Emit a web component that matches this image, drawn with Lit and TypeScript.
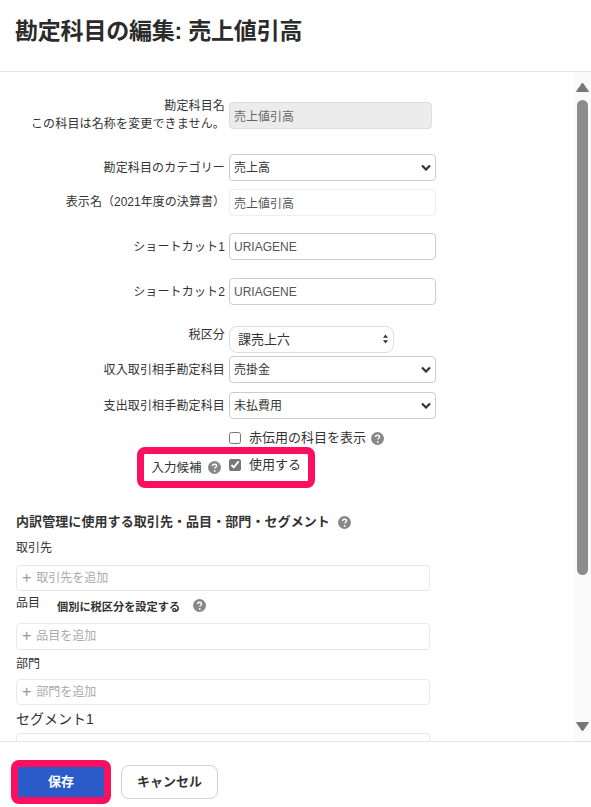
import { LitElement, html, css, svg } from "lit";
import { customElement } from "lit/decorators.js";

const help = () => html`<svg class="help" viewBox="0 0 13 13" aria-hidden="true"><circle cx="6.500" cy="6.500" r="6.500" fill="#888"/><path d="M4.500 5c0-1.100.9-1.800 2-1.800s2 .7 2 1.700c0 1.400-1.700 1.400-1.700 2.700" fill="none" stroke="#fff" stroke-width="1.400"/><circle cx="6.700" cy="9.900" r=".9" fill="#fff"/></svg>`;
const chevron = svg`<path d="M1 1.500 5 5.500 9 1.500" fill="none" stroke="#333" stroke-width="2.200"/>`;

@customElement("app-root")
export class AppRoot extends LitElement {
  static styles = css`
    :host { display: flex; flex-direction: column; width: 591px; height: 807px; overflow: hidden; background: #fff; color: #333; font: 12px/18px "Liberation Sans", "Noto Sans CJK JP", sans-serif; position: relative; }
    * { box-sizing: border-box; }
    header { height: 72px; flex: none; border-bottom: 1px solid #e5e5e5; padding: 15px 15px 0; }
    h1 { margin: 0; font-size: 23px; line-height: 32px; font-weight: 700; color: #2b2b2b; letter-spacing: -0.2px; }
    .middle { flex: 1; min-height: 0; display: flex; overflow: hidden; }
    .content { flex: 1; min-width: 0; padding-top: 30px; }
    .rail { width: 17px; flex: none; background: #fafafa; display: flex; flex-direction: column; align-items: center; padding-top: 10px; }
    .rail svg { width: 13px; height: 10px; display: block; flex: none; }
    .thumb { width: 11px; height: 475px; margin: 8px 0 147px; border-radius: 6px; background: #8c8c8c; flex: none; }
    .row { display: grid; grid-template-columns: 225px 207px; column-gap: 4px; align-items: center; }
    .label { text-align: right; letter-spacing: 0.15px; }
    .field { width: 207px; height: 27px; border: 1px solid #ccc; border-radius: 4px; padding: 0 4px; font: inherit; color: #555; background: #fff; display: block; }
    .field.disabled { width: 203px; background: #ececec; border-color: #ddd; color: #666; }
    .field.soft { border-color: #eee; }
    .selectbox { position: relative; width: 207px; }
    .selectbox select { appearance: none; width: 100%; height: 27px; border: 1px solid #ccc; border-radius: 4px; padding: 0 4px; font: inherit; color: #333; background: #fff; display: block; }
    .selectbox svg { position: absolute; right: 5px; top: 10px; width: 10px; height: 7px; pointer-events: none; }
    .tax { width: 165px; }
    .tax select { border-radius: 8px; padding: 0 8px; border-color: #ddd; font-size: 13px; }
    .tax svg { right: 6px; top: 8px; width: 5px; height: 10px; }
    .checkline { display: flex; align-items: center; gap: 8px; height: 18px; }
    .checkline input { width: 12px; height: 12px; margin: 0; accent-color: #777; flex: none; }
    .checkline span { font-size: 13px; }
    .help { width: 13px; height: 13px; display: inline-block; vertical-align: -2px; flex: none; }
    .r1 { align-items: start; height: 32px; }
    .r1 .label { margin-top: -5px; }
    .r2 { margin-top: 20px; }
    .r3 { margin-top: 8px; align-items: start; }
    .r3 .label { margin-top: 4px; letter-spacing: 0.03px; }
    .r3 .name { display: block; }
    .r4 { margin-top: 17px; }
    .r5 { margin-top: 18px; }
    .r6 { margin-top: 21px; align-items: start; }
    .r7 { margin-top: 3px; }
    .r8 { margin-top: 9px; }
    .r9 { margin-top: 10px; }
    .r9 .help { margin-left: -3px; }
    .r10 { margin-top: 8px; align-items: center; }
    .r10 .label { padding-right: 4px; margin-top: 4px; font-size: 12.500px; letter-spacing: 0; }
    .r10 .checkline { margin-top: -2px; }
    .r10 .help { margin-left: 3px; }
    .section { padding-left: 16px; width: 430px; margin-top: 36px; }
    h2 { margin: 0; font-size: 13px; line-height: 18px; font-weight: 700; color: #333; letter-spacing: 0.08px; display: flex; align-items: center; gap: 8px; }
    .sub { height: 18px; margin-top: 8px; }
    .tag { height: 27px; width: 414px; border: 1px solid #e8e8e8; border-radius: 4px; padding: 0 5px; color: #aaa; display: flex; align-items: center; gap: 5px; }
    .tag i { font: 300 16px/1 "Liberation Sans", sans-serif; color: #999; }
    .t1 { margin-top: 8px; height: 26px; }
    .t2 { margin-top: 11px; padding-bottom: 2px; }
    .t3 { margin-top: 6px; height: 26px; }
    .t4 { margin-top: 5px; }
    .item-head { display: flex; align-items: flex-start; height: 18px; margin-top: 3px; }
    .item-head b { font-size: 11.200px; margin-left: 17px; margin-top: 4px; color: #333; }
    .item-head .help { margin-left: 13px; margin-top: 5px; }
    .seg { font-size: 14px; margin-top: 5px; height: 18px; }
    .sub2 { margin-top: 5px; height: 18px; }
    footer { height: 66px; flex: none; border-top: 1px solid #e5e5e5; background: #fff; position: relative; display: flex; align-items: center; padding: 0 0 0 18px; gap: 17px; }
    button { font: 700 13px/1 "Liberation Sans", "Noto Sans CJK JP", sans-serif; cursor: pointer; }
    .save { width: 86px; height: 30px; margin-top: 14px; background: #2a5bc8; color: #fff; border: none; border-radius: 0; }
    .cancel { width: 97px; height: 34px; margin-top: 14px; background: #fff; color: #333; border: 1px solid #d0d0d0; border-radius: 8px; }
    .mark { position: absolute; border: 7px solid #fb0f5e; border-radius: 8px; pointer-events: none; }
    .m1 { left: 137px; top: 447px; width: 178px; height: 41px; }
    .m2 { left: 11px; top: 760px; width: 100px; height: 44px; }
  `;

  private select(value: string) {
    return html`<div class="selectbox"><select><option>${value}</option></select><svg viewBox="0 0 10 7">${chevron}</svg></div>`;
  }

  render() {
    return html`
      <header><h1>勘定科目の編集: 売上値引高</h1></header>
      <div class="middle">
        <div class="content">
          <div class="row r1"><div class="label">勘定科目名<br />この科目は名称を変更できません。</div><input class="field disabled" disabled value="売上値引高" /></div>
          <div class="row r2"><div class="label">勘定科目のカテゴリー</div>${this.select("売上高")}</div>
          <div class="row r3"><div class="label"><span class="name">表示名（2021年度の決算書）</span></div><input class="field soft" value="売上値引高" /></div>
          <div class="row r4"><div class="label">ショートカット1</div><input class="field" value="URIAGENE" /></div>
          <div class="row r5"><div class="label">ショートカット2</div><input class="field" value="URIAGENE" /></div>
          <div class="row r6"><div class="label">税区分</div>
            <div class="selectbox tax"><select><option>課売上六</option></select><svg viewBox="0 0 6 11"><path d="M3 0 6 4H0zM3 11 0 7h6z" fill="#333"/></svg></div></div>
          <div class="row r7"><div class="label">収入取引相手勘定科目</div>${this.select("売掛金")}</div>
          <div class="row r8"><div class="label">支出取引相手勘定科目</div>${this.select("未払費用")}</div>
          <div class="row r9"><div></div><label class="checkline"><input type="checkbox" /><span>赤伝用の科目を表示</span>${help()}</label></div>
          <div class="row r10"><div class="label">入力候補 ${help()}</div><label class="checkline"><input type="checkbox" checked /><span>使用する</span></label></div>
          <div class="section">
            <h2>内訳管理に使用する取引先・品目・部門・セグメント ${help()}</h2>
            <div class="sub">取引先</div>
            <div class="tag t1"><i>+</i>取引先を追加</div>
            <div class="item-head">品目<b>個別に税区分を設定する</b>${help()}</div>
            <div class="tag t2"><i>+</i>品目を追加</div>
            <div class="sub2">部門</div>
            <div class="tag t3"><i>+</i>部門を追加</div>
            <div class="seg">セグメント1</div>
            <div class="tag t4"></div>
          </div>
        </div>
        <div class="rail">
          <svg viewBox="0 0 13 10"><path d="M6.500 1 12.500 9.500H.5z" fill="#777" stroke="#777" stroke-linejoin="round"/></svg>
          <div class="thumb"></div>
          <svg viewBox="0 0 13 10"><path d="M.5.5H12.500L6.500 9z" fill="#777" stroke="#777" stroke-linejoin="round"/></svg>
        </div>
      </div>
      <footer>
        <button class="save">保存</button>
        <button class="cancel">キャンセル</button>
      </footer>
      <div class="mark m1"></div>
      <div class="mark m2"></div>
    `;
  }
}
